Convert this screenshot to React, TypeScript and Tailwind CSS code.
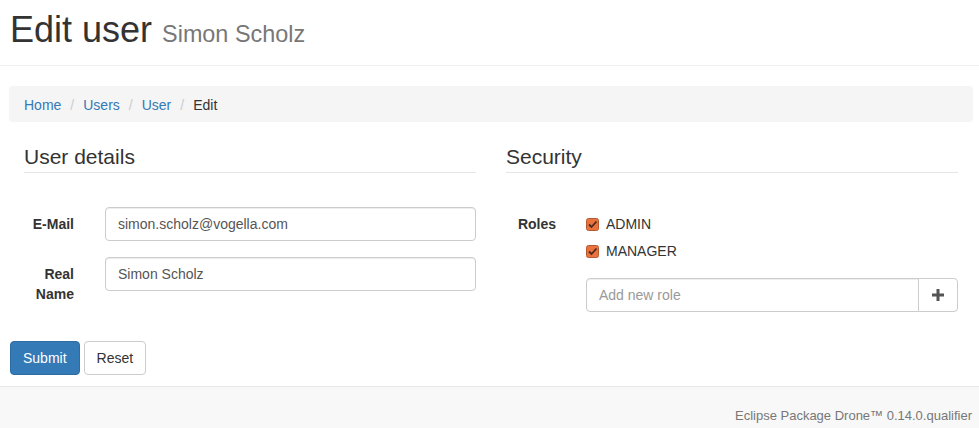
import React from 'react';

const font = { fontFamily: '"Liberation Sans", Arial, sans-serif' };

// Orange checked checkbox as drawn by the browser theme
const CheckBox = () => (
    <svg width="13" height="13" viewBox="0 0 13 13" className="shrink-0">
        <rect x="0.5" y="0.5" width="12" height="12" rx="2" fill="#e8733f" stroke="#b9582c" />
        <path d="M3 6.5 L5.5 9 L10.5 3.5" fill="none" stroke="#4b2a1c" strokeWidth="1.8" />
    </svg>
);

const PlusIcon = () => (
    <svg width="12" height="12" viewBox="0 0 12 12">
        <rect x="4.5" y="0" width="3" height="12" fill="#555" />
        <rect x="0" y="4.5" width="12" height="3" fill="#555" />
    </svg>
);

const inputCls =
    'block w-full h-[34px] px-3 border border-[#ccc] rounded-[4px] bg-white text-sm text-[#555] shadow-[inset_0_1px_1px_rgba(0,0,0,0.075)] outline-none placeholder:text-[#999]';

const labelCls = 'w-[80px] shrink-0 -ml-[15px] px-[15px] pt-[7px] text-right font-bold leading-5';

const Legend = ({ children }: { children: React.ReactNode }) => (
    <div className="h-[31px] text-[21px] leading-[30px] text-[#333] border-b border-[#e5e5e5]">{children}</div>
);

const Sep = () => <li className="pl-[9px] pr-[9px] text-[#ccc]">/</li>;

const App: React.FC = () => {
    return (
        <div className="min-h-screen bg-white text-sm text-[#333]" style={font}>
            {/* Page header */}
            <div className="pt-[10px] pb-[15px] pl-[10px] border-b border-[#eee]">
                <h1 className="h-[40px] text-[36px] leading-[40px] font-normal text-[#333]">
                    Edit user <small className="text-[23.4px] text-[#777]">Simon Scholz</small>
                </h1>
            </div>

            <div className="pl-[9px] pr-[6px]">
                {/* Breadcrumb */}
                <ol className="mt-[20px] flex h-[36px] items-center px-[15px] pt-px rounded-[4px] bg-[#f5f5f5] leading-5">
                    <li><a className="text-[#337ab7]">Home</a></li>
                    <Sep />
                    <li><a className="text-[#337ab7]">Users</a></li>
                    <Sep />
                    <li><a className="text-[#337ab7]">User</a></li>
                    <Sep />
                    <li className="text-[#333]">Edit</li>
                </ol>

                <div className="mt-[20px] flex items-start">
                    {/* User details */}
                    <div className="w-1/2 px-[15px]">
                        <Legend>User details</Legend>
                        <div className="mt-[34px] flex items-start">
                            <label className={labelCls}>E-Mail</label>
                            <div className="flex-1 pl-[16px]">
                                <input className={inputCls} defaultValue="simon.scholz@vogella.com" />
                            </div>
                        </div>
                        <div className="mt-[16px] flex items-start">
                            <label className={labelCls}>Real Name</label>
                            <div className="flex-1 pl-[16px]">
                                <input className={inputCls} defaultValue="Simon Scholz" />
                            </div>
                        </div>
                    </div>

                    {/* Security */}
                    <div className="w-1/2 px-[15px]">
                        <Legend>Security</Legend>
                        <div className="mt-[34px] flex items-start">
                            <label className={labelCls}>Roles</label>
                            <div className="flex-1 pl-[15px] pt-[7px]">
                                <div className="flex flex-col gap-[7px]">
                                    {['ADMIN', 'MANAGER'].map((role) => (
                                        <label key={role} className="flex items-center gap-[7px] leading-5">
                                            <CheckBox />
                                            {role}
                                        </label>
                                    ))}
                                </div>
                                <div className="mt-[17px] flex">
                                    <input
                                        className="flex-1 min-w-0 h-[34px] px-3 border border-[#ccc] rounded-l-[4px] bg-white text-sm text-[#555] shadow-[inset_0_1px_1px_rgba(0,0,0,0.075)] outline-none placeholder:text-[#999]"
                                        placeholder="Add new role"
                                    />
                                    <button className="w-[40px] h-[34px] -ml-px flex items-center justify-center border border-[#ccc] rounded-r-[4px] bg-white">
                                        <PlusIcon />
                                    </button>
                                </div>
                            </div>
                        </div>
                    </div>
                </div>

                {/* Actions */}
                <div className="mt-[29px] flex gap-[4px] pl-px">
                    <button className="h-[34px] px-[12px] rounded-[4px] border border-[#2e6da4] bg-[#337ab7] text-white">
                        Submit
                    </button>
                    <button className="h-[34px] px-[12px] rounded-[4px] border border-[#ccc] bg-white text-[#333]">
                        Reset
                    </button>
                </div>
            </div>

            {/* Footer */}
            <footer className="mt-[11px] h-[60px] border-t border-[#e7e7e7] bg-[#f8f8f8] pt-[20px] pr-[7px] text-right text-[13px] leading-[18px] text-[#777]">
                Eclipse Package Drone™ 0.14.0.qualifier
            </footer>
        </div>
    );
};

export default App;
